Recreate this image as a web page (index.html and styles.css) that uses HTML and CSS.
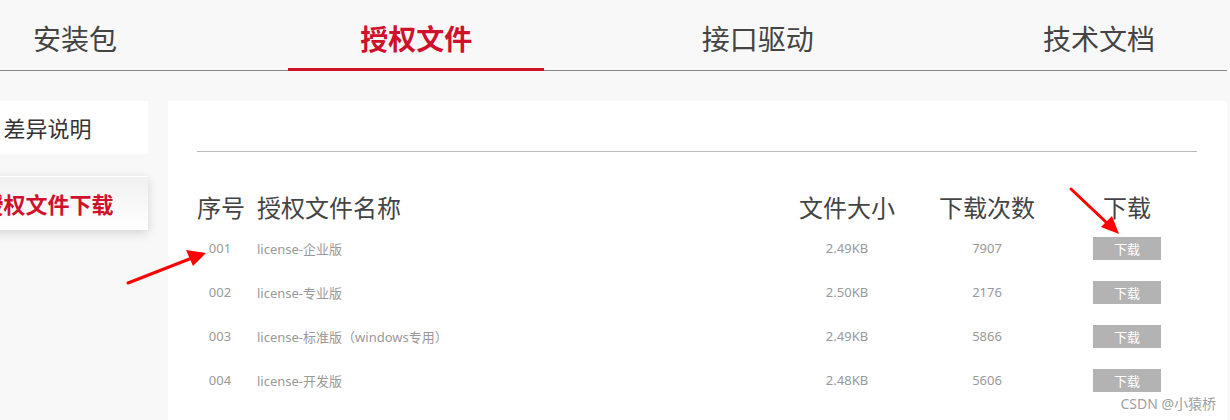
FILE: index.html
```html
<!DOCTYPE html>
<html lang="zh-CN">
<head>
  <meta charset="UTF-8" />
  <title>授权文件</title>
  <link rel="stylesheet" href="styles.css">
</head>
<body>
  <div class="page">
    <nav class="tabs">
      <a href="#" class="tab">安装包</a>
      <a href="#" class="tab active">授权文件</a>
      <a href="#" class="tab">接口驱动</a>
      <a href="#" class="tab">技术文档</a>
    </nav>

    <div class="main">
      <!-- 左侧菜单 -->
      <ul class="side">
        <li class="side-item">差异说明</li>
        <li class="side-item active">授权文件下载</li>
      </ul>

      <!-- 文件列表 -->
      <div class="panel">
        <div class="rule"></div>
        <div class="row head">
          <div class="no">序号</div>
          <div class="name">授权文件名称</div>
          <div class="size">文件大小</div>
          <div class="count">下载次数</div>
          <div class="dl">下载</div>
        </div>
        <div class="row">
          <div class="no">001</div>
          <div class="name">license-企业版</div>
          <div class="size">2.49KB</div>
          <div class="count">7907</div>
          <div class="dl"><button class="btn">下载</button></div>
        </div>
        <div class="row">
          <div class="no">002</div>
          <div class="name">license-专业版</div>
          <div class="size">2.50KB</div>
          <div class="count">2176</div>
          <div class="dl"><button class="btn">下载</button></div>
        </div>
        <div class="row">
          <div class="no">003</div>
          <div class="name">license-标准版（windows专用）</div>
          <div class="size">2.49KB</div>
          <div class="count">5866</div>
          <div class="dl"><button class="btn">下载</button></div>
        </div>
        <div class="row">
          <div class="no">004</div>
          <div class="name">license-开发版</div>
          <div class="size">2.48KB</div>
          <div class="count">5606</div>
          <div class="dl"><button class="btn">下载</button></div>
        </div>
      </div>
    </div>
  </div>

  <!-- 标注箭头 -->
  <svg class="marks" width="1230" height="420" viewBox="0 0 1230 420">
    <line x1="128" y1="283" x2="192" y2="258" stroke="#f00" stroke-width="3" stroke-linecap="round" />
    <polygon points="206,253 186,250 193,266" fill="#f00" />
    <line x1="1071" y1="189" x2="1108" y2="224" stroke="#f00" stroke-width="3" stroke-linecap="round" />
    <polygon points="1119,234 1101,227 1112,216" fill="#f00" />
  </svg>

  <div class="watermark">CSDN @小猿桥</div>
</body>
</html>
```

FILE: styles.css
```css
body {
  margin: 0;
  background-color: #f8f8f8;
  font-family: "Noto Sans", "Noto Sans CJK SC", sans-serif;
  color: #444;
  overflow: hidden;
  height: 420px;
}
.page {
  width: 1280px;
  margin-left: -53px;
}
.tabs {
  display: flex;
  justify-content: space-between;
  height: 70px;
  border-bottom: 1px solid #888;
}
.tab {
  width: 256px;
  height: 70px;
  line-height: 76px;
  text-align: center;
  font-family: "Noto Sans CJK SC", sans-serif;
  font-size: 28px;
  color: #444;
  text-decoration: none;
}
.tab.active {
  color: #d0112b;
  font-weight: bold;
  height: 68px;
  border-bottom: 3px solid #d0112b;
}
.main {
  display: flex;
  gap: 20px;
  margin-top: 30px;
}
.side {
  list-style: none;
  margin: 0;
  padding: 0;
  width: 201px;
  flex-shrink: 0;
}
.side-item {
  height: 53px;
  line-height: 53px;
  margin-bottom: 22px;
  text-align: center;
  background-color: #fff;
  font-family: "Noto Sans CJK SC", sans-serif;
  font-size: 22px;
  color: #333;
}
.side-item.active {
  color: #d0112b;
  font-weight: bold;
  background: linear-gradient(#f0f0f0, #fff);
  border-top: 1px solid #fff;
  box-shadow: 0 3px 10px rgba(0, 0, 0, 0.15);
}
.panel {
  width: 1059px;
  background-color: #fff;
  padding: 50px 30px 0 29px;
  height: 269px;
}
.rule {
  border-top: 1px solid #bbb;
}
.row {
  display: grid;
  grid-template-columns: 46px 1fr 140px 140px 140px;
  height: 44px;
  align-items: center;
  font-size: 13px;
  color: #999;
}
.row.head {
  height: 40px;
  margin-top: 34px;
  font-family: "Noto Sans CJK SC", sans-serif;
  font-size: 24px;
  color: #444;
}
.no,
.size,
.count,
.dl {
  text-align: center;
  white-space: nowrap;
}
.name {
  padding-left: 14px;
  white-space: nowrap;
}
.btn {
  width: 68px;
  height: 23px;
  border: none;
  background-color: #b3b3b3;
  color: #fff;
  font-family: "Noto Sans CJK SC", sans-serif;
  font-size: 13px;
  padding: 0;
}
.marks {
  position: absolute;
  left: 0;
  top: 0;
  pointer-events: none;
}
.watermark {
  position: absolute;
  right: 14px;
  bottom: 7px;
  font-size: 14px;
  color: #a0a0a0;
}
```
